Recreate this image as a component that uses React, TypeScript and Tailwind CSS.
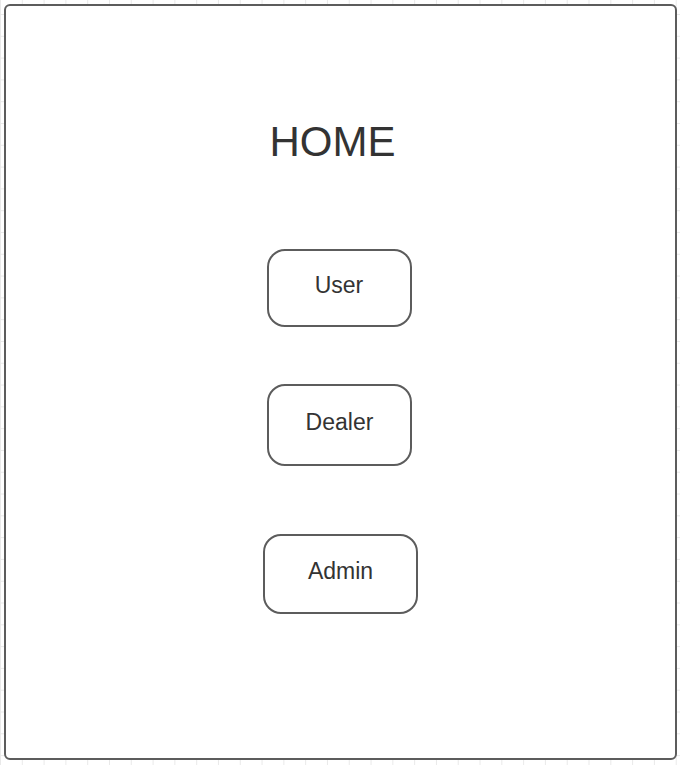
import * as React from 'react';

// wireframe nav buttons
const buttons = [
  { label: 'User', cls: 'mt-[83px] w-[145px] h-[78px] mr-[3px]' },
  { label: 'Dealer', cls: 'mt-[57px] w-[145px] h-[82px] mr-[2px]' },
  { label: 'Admin', cls: 'mt-[68px] w-[155px] h-[80px]' },
];

export default function App() {
  return (
    <div className="w-[680px] h-[765px] p-[4px] bg-white bg-[linear-gradient(to_right,#e9e9e9_1px,transparent_1px),linear-gradient(to_bottom,#e9e9e9_1px,transparent_1px)] bg-[size:21.8px_21.8px] bg-[position:0_14px] font-['Liberation_Sans',Arial,sans-serif] text-[#333333]">
      <div className="w-[673px] h-[756px] bg-white border-2 border-[#5c5c5c] rounded-[6px] flex flex-col items-center pt-[112px]">
        <h1 className="text-[42px] leading-[48px] mr-[16px]">HOME</h1>
        {buttons.map((b) => (
          <button
            key={b.label}
            className={`${b.cls} shrink-0 flex items-center justify-center pb-[6px] border-2 border-[#5c5c5c] rounded-[18px] bg-white text-[23px] leading-none text-[#333333]`}
          >
            {b.label}
          </button>
        ))}
      </div>
    </div>
  );
}
